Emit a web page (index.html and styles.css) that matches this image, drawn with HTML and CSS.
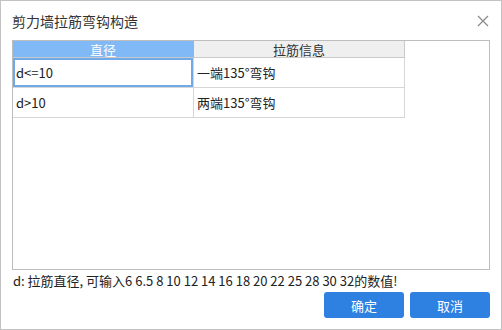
FILE: index.html
```html
<!DOCTYPE html>
<html lang="zh">
<head>
<meta charset="utf-8">
<link rel="stylesheet" href="styles.css">
</head>
<body>
<div class="dialog">
  <div class="titlebar">
    <span class="title">剪力墙拉筋弯钩构造</span>
    <svg class="close" width="12" height="12" viewBox="0 0 12 12"><path d="M1 1L11 11M11 1L1 11" stroke="#8a8a8a" stroke-width="1.2" fill="none"/></svg>
  </div>
  <div class="grid">
    <div class="row head">
      <div class="cell c1 hsel">直径</div>
      <div class="cell c2 hnorm">拉筋信息</div>
    </div>
    <div class="row body">
      <div class="cell c1 sel">d&lt;=10</div>
      <div class="cell c2">一端135°弯钩</div>
    </div>
    <div class="row body">
      <div class="cell c1">d&gt;10</div>
      <div class="cell c2">两端135°弯钩</div>
    </div>
  </div>
  <div class="hint">d: 拉筋直径, 可输入6 6.5 8 10 12 14 16 18 20 22 25 28 30 32的数值!</div>
  <div class="buttons">
    <button class="btn">确定</button>
    <button class="btn">取消</button>
  </div>
</div>
</body>
</html>
```
FILE: styles.css
```css
* { box-sizing: border-box; }
html, body { margin: 0; padding: 0; background: #fff; }
body { font-family: "Noto Sans CJK SC", "Noto Sans", sans-serif; color: #222; }
.dialog {
  width: 502px; height: 330px;
  border: 1px solid #c3c3c3;
  display: flex; flex-direction: column;
}
.titlebar {
  height: 39px;
  display: flex; align-items: center; justify-content: space-between;
  padding: 0 12px 0 11px;
}
.title { font-size: 14px; color: #333; line-height: 1; }
.close { margin-top: 1px; }
.grid {
  margin: 0 11px;
  height: 230px;
  border: 1px solid #bdbdbd;
}
.row { display: flex; }
.row.head { height: 17px; }
.row.body { height: 30px; }
.cell {
  font-size: 13px;
  display: flex; align-items: center;
  border-right: 1px solid #d6d6d6;
  border-bottom: 1px solid #d6d6d6;
}
.c1 { width: 181px; }
.c2 { width: 211px; }
.head .cell { justify-content: center; line-height: 1; }
.hsel { background: #80b9f6; color: #fff; border-right-color: #80b9f6; border-bottom-color: #c9c9c9; }
.hnorm { background: #efefef; color: #333; border-right-color: #c9c9c9; border-bottom-color: #c9c9c9; }
.body .cell { padding-left: 3px; }
.sel { box-shadow: inset 0 0 0 2px #6fa9ea; }
.hint {
  font-size: 13px; color: #222;
  padding: 2px 0 0 12px;
  height: 22px; line-height: 18px;
}
.buttons {
  display: flex; justify-content: flex-end; gap: 6px;
  padding: 0 11px 0 0;
}
.btn {
  width: 80px; height: 26px;
  border: none; border-radius: 3px;
  background: #2e80e1; color: #fff;
  font-family: "Noto Sans CJK SC", sans-serif; font-size: 13px;
  padding: 0;
}
```
